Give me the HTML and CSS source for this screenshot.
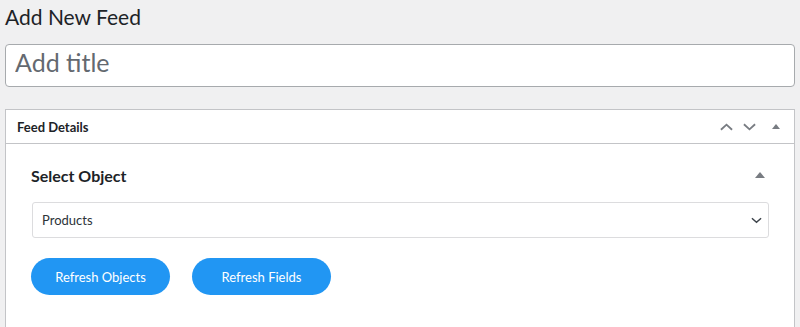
FILE: index.html
```html
<!DOCTYPE html>
<html lang="en">
<head>
  <meta charset="UTF-8">
  <title>Add New Feed</title>
  <link rel="stylesheet" href="styles.css">
</head>
<body>
  <div class="wrap">
    <h1 class="page-title">Add New Feed</h1>
    <input class="title-input" type="text" placeholder="Add title">

    <div class="postbox">
      <div class="postbox-header">
        <h2>Feed Details</h2>
        <div class="handle-actions">
          <svg class="chev" viewBox="0 0 14 8"><path d="M1 7 L7 1.5 L13 7"/></svg>
          <svg class="chev" viewBox="0 0 14 8"><path d="M1 1 L7 6.5 L13 1"/></svg>
          <span class="tri"></span>
        </div>
      </div>

      <div class="postbox-inside">
        <div class="section-head">
          <h3>Select Object</h3>
          <span class="tri"></span>
        </div>

        <div class="select-box">
          <span>Products</span>
          <svg class="select-chev" viewBox="0 0 12 7"><path d="M1 1 L6 5.5 L11 1"/></svg>
        </div>

        <div class="buttons">
          <button class="btn">Refresh Objects</button>
          <button class="btn">Refresh Fields</button>
        </div>
      </div>
    </div>
  </div>
</body>
</html>
```

FILE: styles.css
```css
* {
  box-sizing: border-box;
}

body {
  margin: 0;
  background: #f0f0f1;
  font-family: Lato, 'Open Sans', sans-serif;
  color: #1d2327;
  overflow: hidden;
}

.wrap {
  padding: 3px 5px 0 5px;
}

.page-title {
  margin: 0;
  font-size: 21px;
  font-weight: 400;
  line-height: 27px;
  color: #1d2327;
}

.title-input {
  display: block;
  width: 790px;
  height: 43px;
  margin-top: 14px;
  padding: 0 9px 7px 9px;
  border: 1px solid #a7aaad;
  border-radius: 4px;
  background: #fff;
  font-family: Lato, 'Open Sans', sans-serif;
  font-size: 25px;
  color: #1d2327;
  outline: none;
}

.title-input::placeholder {
  color: #646970;
}

.postbox {
  margin-top: 22px;
  width: 790px;
  height: 218px;
  background: #fff;
  border: 1px solid #c3c4c7;
  border-bottom: none;
}

.postbox-header {
  display: flex;
  align-items: center;
  justify-content: space-between;
  height: 34px;
  border-bottom: 1px solid #c3c4c7;
  padding: 0 14px 0 11px;
}

.postbox-header h2 {
  margin: 0;
  font-size: 13px;
  font-weight: 700;
  color: #1d2327;
}

.handle-actions {
  display: flex;
  align-items: center;
  gap: 10px;
}

.chev {
  width: 13px;
  height: 8px;
  fill: none;
  stroke: #787c82;
  stroke-width: 2;
}

.tri {
  width: 0;
  height: 0;
  border-left: 4px solid transparent;
  border-right: 4px solid transparent;
  border-bottom: 5px solid #787c82;
  margin-left: 6px;
}

.postbox-inside {
  padding: 21px 24px 0 25px;
}

.section-head {
  display: flex;
  align-items: center;
  justify-content: space-between;
  height: 20px;
  padding-right: 5px;
}

.section-head h3 {
  margin: 0;
  font-size: 16px;
  font-weight: 700;
  color: #1d2327;
}

.section-head .tri {
  border-left-width: 5px;
  border-right-width: 5px;
  border-bottom-width: 6px;
}

.select-box {
  display: flex;
  align-items: center;
  justify-content: space-between;
  margin-top: 17px;
  margin-left: 1px;
  width: 737px;
  height: 36px;
  padding: 0 6px 0 9px;
  border: 1px solid #dcdcde;
  border-radius: 3px;
  font-size: 13px;
  color: #2c3338;
}

.select-chev {
  width: 11px;
  height: 7px;
  fill: none;
  stroke: #3c434a;
  stroke-width: 1.6;
}

.buttons {
  display: flex;
  gap: 22px;
  margin-top: 20px;
}

.btn {
  width: 139px;
  height: 37px;
  border: none;
  border-radius: 19px;
  background: #2196f3;
  color: #fff;
  font-family: Lato, 'Open Sans', sans-serif;
  font-size: 13px;
  cursor: pointer;
}
```
